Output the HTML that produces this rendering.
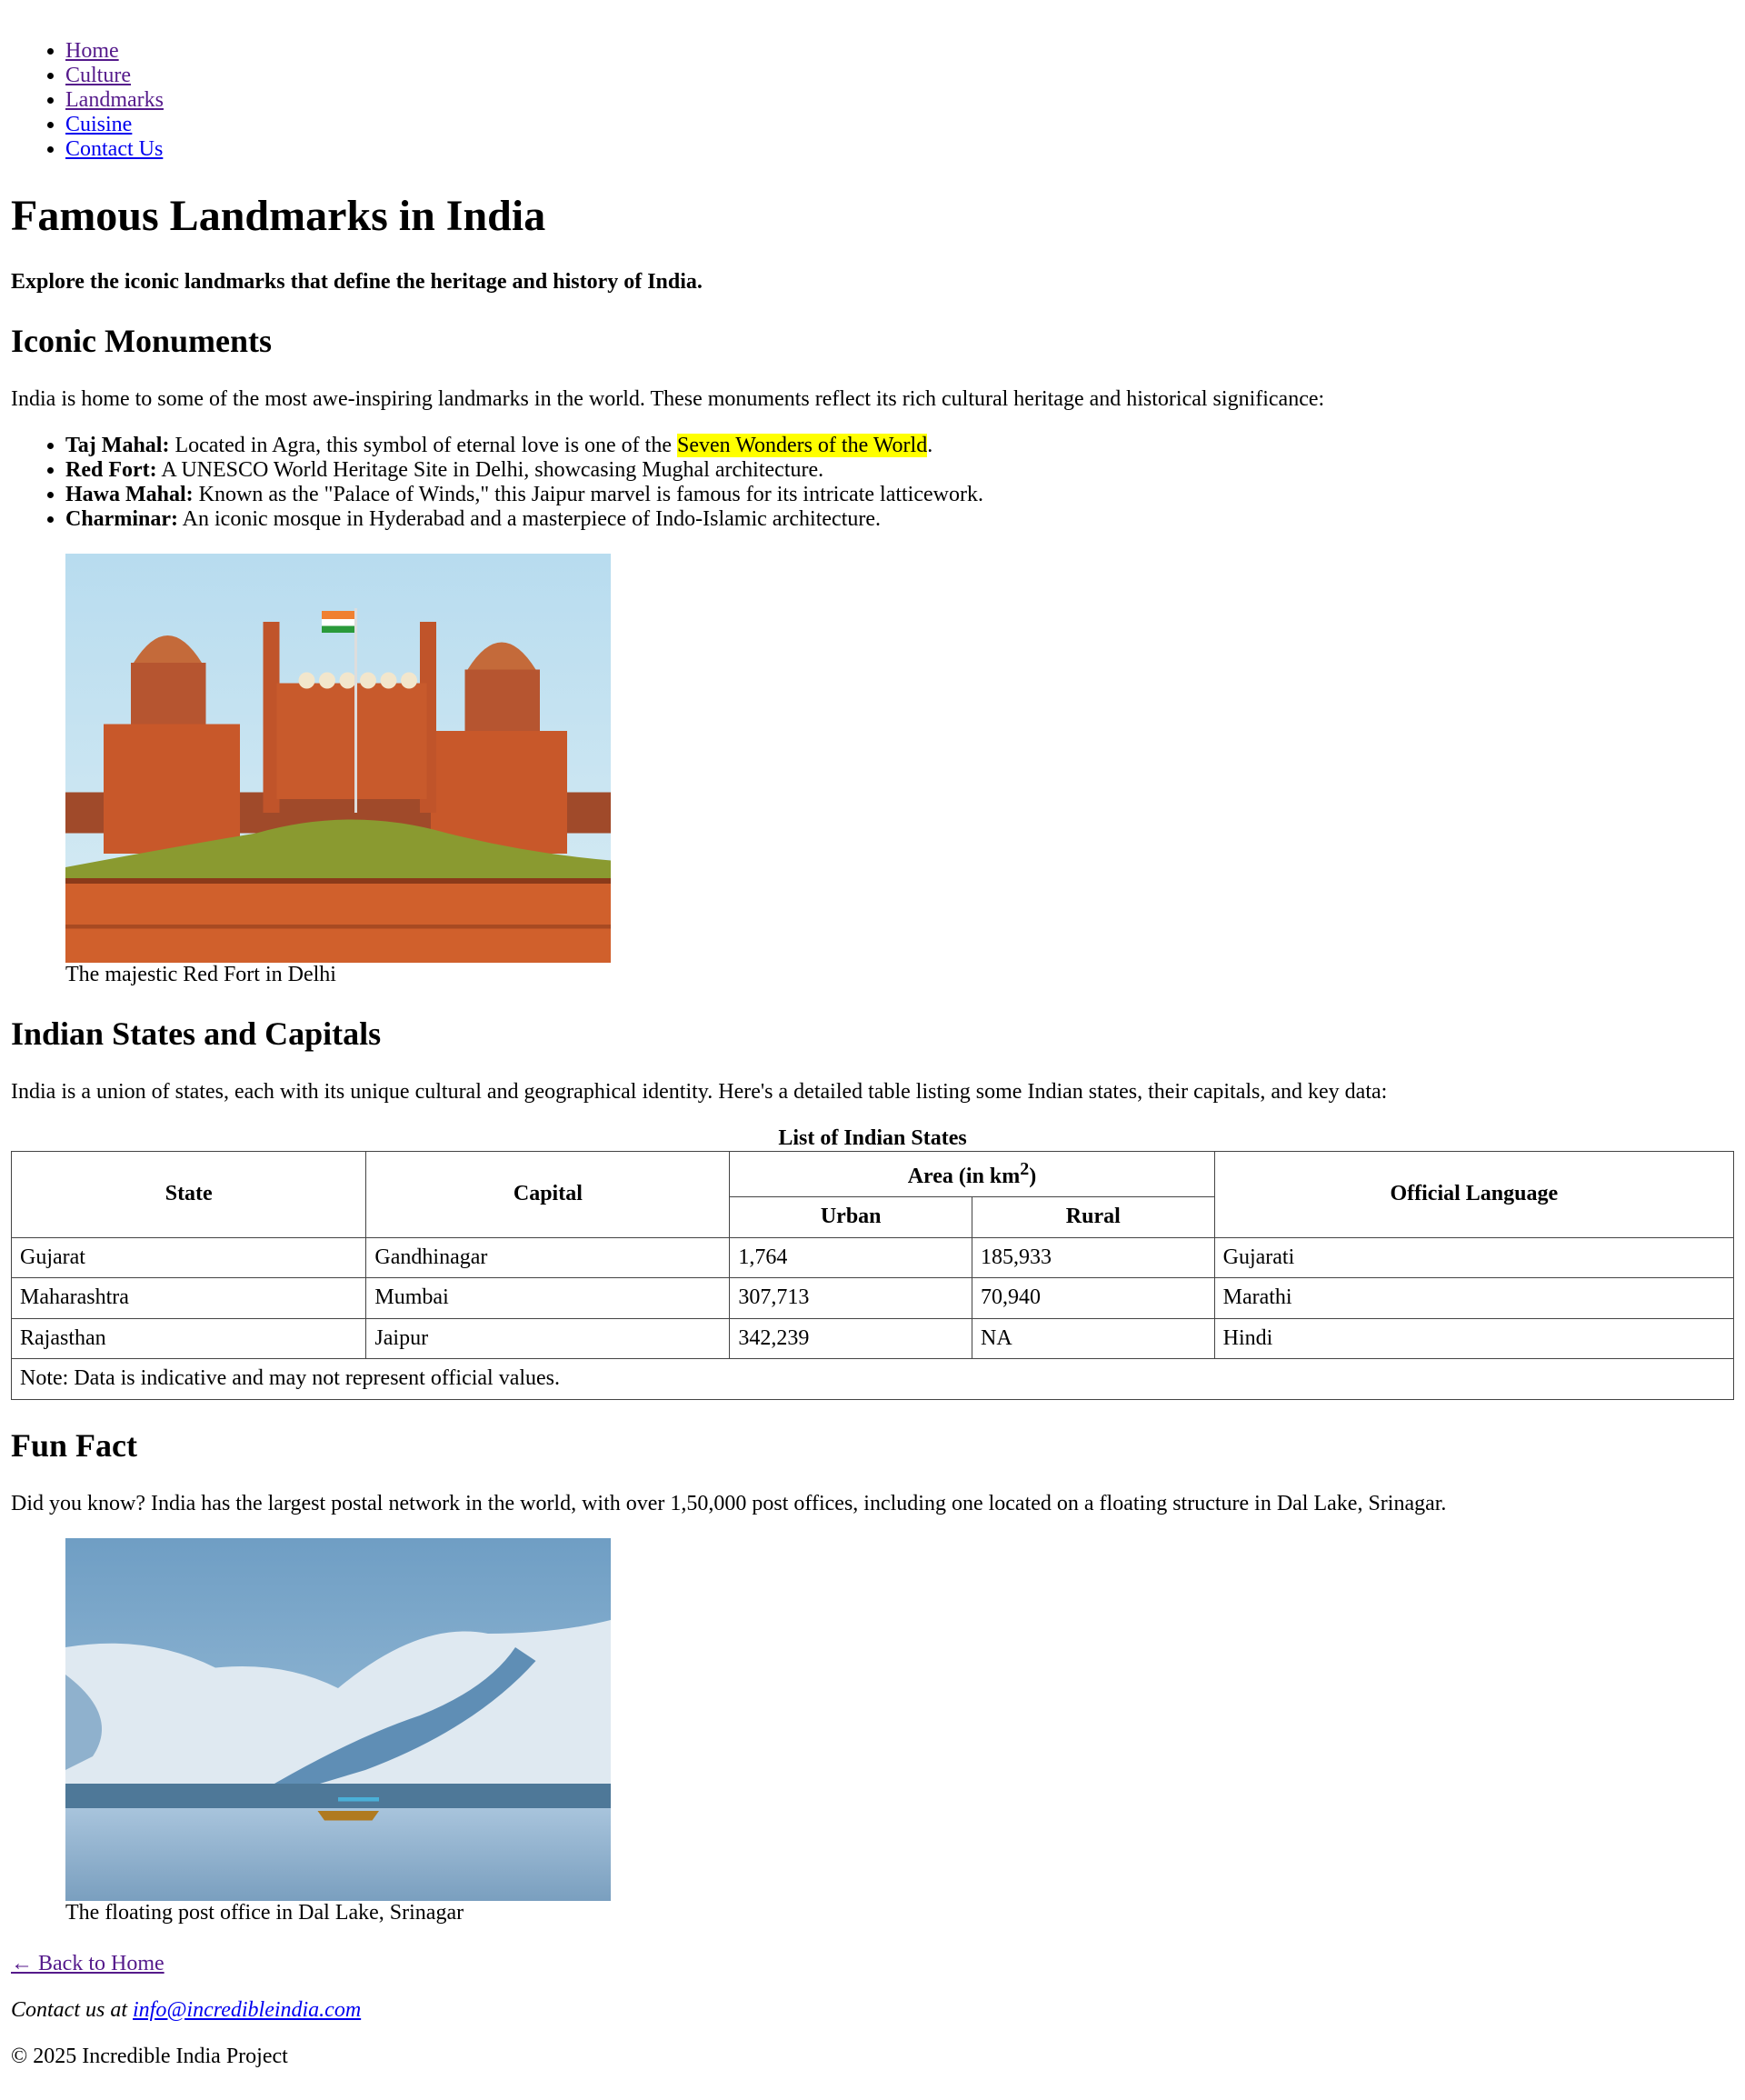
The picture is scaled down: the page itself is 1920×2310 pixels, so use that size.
<!DOCTYPE html>
<html><head><meta charset="utf-8">
<style>
html{zoom:1.5}
body{margin:8px;padding-top:4.5px;font-family:"Liberation Serif",serif;font-size:16px;color:#000;background:#fff}
a{color:#0000ee}
a.v{color:#551a8b}
figure{margin:16px 40px 19px}
figure svg{display:block}
table{border-collapse:collapse;width:100%}
caption{font-weight:bold}
th,td{border:1px solid #444;padding:5.5px 6px;text-align:left}
th{text-align:center}
mark{background:#ff0}
</style></head><body>
<nav><ul>
<li><a class="v" href="#">Home</a></li>
<li><a class="v" href="#">Culture</a></li>
<li><a class="v" href="#">Landmarks</a></li>
<li><a href="#">Cuisine</a></li>
<li><a href="#">Contact Us</a></li>
</ul></nav>
<h1>Famous Landmarks in India</h1>
<p><strong>Explore the iconic landmarks that define the heritage and history of India.</strong></p>
<h2>Iconic Monuments</h2>
<p>India is home to some of the most awe-inspiring landmarks in the world. These monuments reflect its rich cultural heritage and historical significance:</p>
<ul>
<li><strong>Taj Mahal:</strong> Located in Agra, this symbol of eternal love is one of the <mark>Seven Wonders of the World</mark>.</li>
<li><strong>Red Fort:</strong> A UNESCO World Heritage Site in Delhi, showcasing Mughal architecture.</li>
<li><strong>Hawa Mahal:</strong> Known as the "Palace of Winds," this Jaipur marvel is famous for its intricate latticework.</li>
<li><strong>Charminar:</strong> An iconic mosque in Hyderabad and a masterpiece of Indo-Islamic architecture.</li>
</ul>
<figure>
<svg width="400" height="300" viewBox="0 0 400 300">
<defs><linearGradient id="sk" x1="0" y1="0" x2="0" y2="1"><stop offset="0" stop-color="#b8dcef"/><stop offset="1" stop-color="#d8ecf4"/></linearGradient></defs>
<rect width="400" height="300" fill="url(#sk)"/>
<rect x="0" y="175" width="400" height="30" fill="#a04a2a"/>
<rect x="28" y="125" width="100" height="95" fill="#c8582a"/>
<rect x="268" y="130" width="100" height="90" fill="#c8582a"/>
<path d="M50 80 Q75 40 100 80Z" fill="#c46a3a"/><rect x="48" y="80" width="55" height="45" fill="#b65530"/>
<path d="M295 85 Q320 45 345 85Z" fill="#c46a3a"/><rect x="293" y="85" width="55" height="45" fill="#b65530"/>
<rect x="145" y="50" width="12" height="140" fill="#c0542a"/><rect x="260" y="50" width="12" height="140" fill="#c0542a"/>
<rect x="155" y="95" width="110" height="85" fill="#c85a2c"/>
<g fill="#f2e6cc"><circle cx="177" cy="93" r="6"/><circle cx="192" cy="93" r="6"/><circle cx="207" cy="93" r="6"/><circle cx="222" cy="93" r="6"/><circle cx="237" cy="93" r="6"/><circle cx="252" cy="93" r="6"/></g>
<rect x="212" y="40" width="2" height="150" fill="#ddd"/>
<rect x="188" y="42" width="24" height="6" fill="#f08030"/><rect x="188" y="48" width="24" height="5" fill="#fff"/><rect x="188" y="53" width="24" height="5" fill="#2a9a3a"/>
<path d="M0 230 Q80 215 140 205 Q210 185 280 205 Q340 220 400 225 L400 245 L0 245Z" fill="#8a9a30"/>
<rect x="0" y="238" width="400" height="62" fill="#d0602c"/>
<rect x="0" y="238" width="400" height="4" fill="#8a3a1a"/>
<rect x="0" y="272" width="400" height="3" fill="#a84a22"/>
</svg>
<figcaption>The majestic Red Fort in Delhi</figcaption>
</figure>
<h2>Indian States and Capitals</h2>
<p>India is a union of states, each with its unique cultural and geographical identity. Here's a detailed table listing some Indian states, their capitals, and key data:</p>
<table>
<caption>List of Indian States</caption>
<thead>
<tr><th rowspan="2" style="width:20.5%">State</th><th rowspan="2" style="width:21%">Capital</th><th colspan="2">Area (in km<sup>2</sup>)</th><th rowspan="2" style="width:30%">Official Language</th></tr>
<tr><th style="width:14%">Urban</th><th style="width:14%">Rural</th></tr>
</thead>
<tbody>
<tr><td>Gujarat</td><td>Gandhinagar</td><td>1,764</td><td>185,933</td><td>Gujarati</td></tr>
<tr><td>Maharashtra</td><td>Mumbai</td><td>307,713</td><td>70,940</td><td>Marathi</td></tr>
<tr><td>Rajasthan</td><td>Jaipur</td><td>342,239</td><td>NA</td><td>Hindi</td></tr>
</tbody>
<tfoot><tr><td colspan="5">Note: Data is indicative and may not represent official values.</td></tr></tfoot>
</table>
<h2>Fun Fact</h2>
<p>Did you know? India has the largest postal network in the world, with over 1,50,000 post offices, including one located on a floating structure in Dal Lake, Srinagar.</p>
<figure>
<svg width="400" height="266" viewBox="0 0 400 266">
<defs><linearGradient id="s2" x1="0" y1="0" x2="0" y2="1"><stop offset="0" stop-color="#6f9ec4"/><stop offset="1" stop-color="#a9c8de"/></linearGradient>
<linearGradient id="w2" x1="0" y1="0" x2="0" y2="1"><stop offset="0" stop-color="#a8c4dc"/><stop offset="1" stop-color="#7a9fbf"/></linearGradient></defs>
<rect width="400" height="266" fill="url(#s2)"/>
<path d="M0 80 Q60 70 110 95 Q160 90 200 110 Q260 60 310 70 Q360 70 400 60 L400 190 L0 190Z" fill="#dfe9f1"/>
<path d="M120 200 Q200 150 260 130 Q310 110 330 80 L345 90 Q300 140 220 170Z" fill="#3f77a6" opacity=".8"/>
<path d="M0 100 Q40 130 20 160 L0 170Z" fill="#5a8cb6" opacity=".6"/>
<rect x="0" y="180" width="400" height="20" fill="#4e7898"/>
<rect x="0" y="198" width="400" height="68" fill="url(#w2)"/>
<path d="M185 200 L230 200 L225 207 L190 207Z" fill="#b07a20"/>
<rect x="200" y="190" width="30" height="3" fill="#4ab0d8"/>
</svg>
<figcaption>The floating post office in Dal Lake, Srinagar</figcaption>
</figure>
<p><a class="v" href="#">← Back to Home</a></p>
<p><em>Contact us at <a href="#">info@incredibleindia.com</a></em></p>
<p>© 2025 Incredible India Project</p>
</body></html>
